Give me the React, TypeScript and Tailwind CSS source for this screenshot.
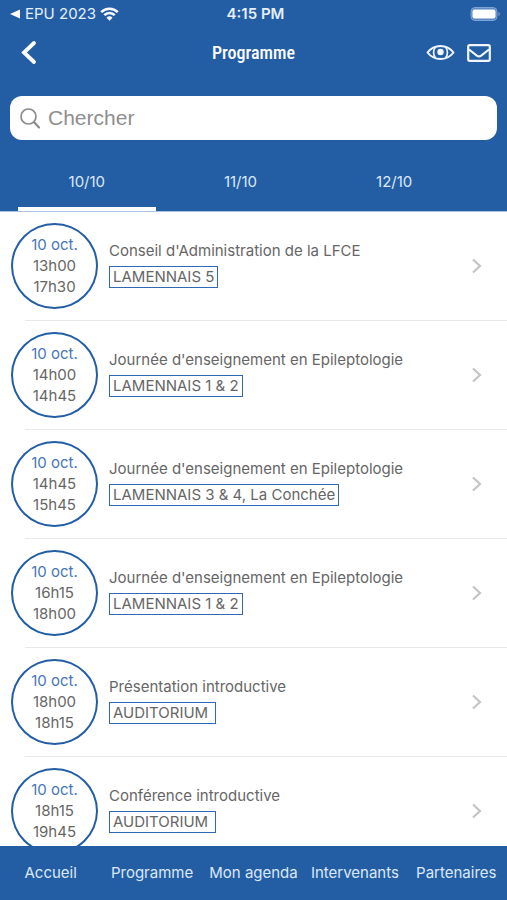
import React from "react";

const tabs = ["10/10", "11/10", "12/10"];

const sessions = [
  { start: "13h00", end: "17h30", title: "Conseil d'Administration de la LFCE", room: "LAMENNAIS 5" },
  { start: "14h00", end: "14h45", title: "Journée d'enseignement en Epileptologie", room: "LAMENNAIS 1 & 2" },
  { start: "14h45", end: "15h45", title: "Journée d'enseignement en Epileptologie", room: "LAMENNAIS 3 & 4, La Conchée" },
  { start: "16h15", end: "18h00", title: "Journée d'enseignement en Epileptologie", room: "LAMENNAIS 1 & 2" },
  { start: "18h00", end: "18h15", title: "Présentation introductive", room: "AUDITORIUM\u00a0" },
  { start: "18h15", end: "19h45", title: "Conférence introductive", room: "AUDITORIUM\u00a0" },
];

const links = ["Accueil", "Programme", "Mon agenda", "Intervenants", "Partenaires"];

const StatusBar = () => (
  <div className="grid h-7 grid-cols-3 items-center pr-1.5 pl-2.5 text-[15px] leading-5 text-[#e6eefa]">
    <div className="flex items-center gap-1 whitespace-nowrap">
      <svg width="11" height="10" viewBox="0 0 11 10" fill="#fff" aria-hidden="true">
        <path d="M0 5 10 .5v9z" />
      </svg>
      <span>EPU 2023</span>
      <svg width="19" height="14" viewBox="0 0 19 14" fill="none" stroke="#fff" strokeWidth="2.6" aria-hidden="true">
        <path d="M1.2 5.1a11.8 11.8 0 0 1 16.6 0" />
        <path d="M4.3 8.2a7.4 7.4 0 0 1 10.4 0" />
        <path d="M9.5 13.8 6.5 10.7a4.3 4.3 0 0 1 6 0z" fill="#fff" stroke="none" />
      </svg>
    </div>
    <span className="text-center font-semibold">4:15 PM</span>
    <svg className="justify-self-end" width="31" height="14" viewBox="0 0 31 14" aria-hidden="true">
      <rect x="1" y=".5" width="26" height="13" rx="4" fill="#5d89c2" stroke="#7fa3d3" />
      <rect x="2.5" y="2.5" width="23" height="9" rx="2.2" fill="#fff" />
      <path d="M28.5 5v4c1.800-.6 1.800-3.400 0-4z" fill="#7fa3d3" />
    </svg>
  </div>
);

const TopBar = () => (
  <div className="grid h-[50px] grid-cols-3 items-center px-4 text-white">
    <button type="button" aria-label="Retour" className="justify-self-start px-1">
      <svg width="18" height="26" viewBox="0 0 18 26" fill="none" stroke="#fff" strokeWidth="3.8" strokeLinecap="round" strokeLinejoin="miter">
        <path d="M14 3 4 12.500l10 9.500" />
      </svg>
    </button>
    <h1 className="text-center font-['Roboto_Condensed','Roboto',sans-serif] text-[18px] leading-6 font-medium">
      Programme
    </h1>
    <div className="flex items-center gap-3 justify-self-end">
      <button type="button" aria-label="Afficher">
        <svg width="29" height="18" viewBox="0 0 29 18" fill="none" stroke="#f0f6ff" strokeWidth="2">
          <path d="M1.5 8.500C5 4 9.500 2 14.500 2S24 4 27.500 8.500C24 13 19.500 15 14.500 15S5 13 1.500 8.500z" strokeLinejoin="round" />
          <path d="M9.500 3c-2.600 3-2.600 8 0 11M19.500 3c2.600 3 2.600 8 0 11" strokeWidth="1.700" />
          <circle cx="14.500" cy="8" r="3.200" fill="#f0f6ff" stroke="none" />
        </svg>
      </button>
      <button type="button" aria-label="Messages">
        <svg width="24" height="18" viewBox="0 0 24 18" fill="none" stroke="#f0f6ff" strokeWidth="2.200" strokeLinejoin="round">
          <rect x="1.200" y="1.200" width="21.600" height="15.600" rx="1.500" />
          <path d="M2 5.500 9.800 11.700q2.200 1.500 4.400 0L22 5.500" />
        </svg>
      </button>
    </div>
  </div>
);

const App = () => {
  return (
    <div className="flex h-screen flex-col bg-white font-['Inter',sans-serif]">
      <header className="shrink-0 border-b border-[#a9c1e2] bg-[#235ea5]">
        <StatusBar />
        <TopBar />

        {/* Search */}
        <label className="mx-2.5 mt-[18px] flex h-11 items-center gap-2 rounded-xl bg-white px-2.5">
          <svg width="20" height="21" viewBox="0 0 20 21" fill="none" stroke="#8b8b8b" strokeWidth="1.700" strokeLinecap="round" aria-hidden="true">
            <circle cx="8.500" cy="8.500" r="7.500" />
            <path d="m14 14 5 5.500" strokeWidth="2.200" />
          </svg>
          <input
            type="search"
            aria-label="Chercher"
            placeholder="Chercher"
            className="min-w-0 flex-1 bg-transparent font-['Liberation_Sans',sans-serif] text-[21px] text-gray-700 outline-none placeholder:text-[#8e8e8e]"
          />
        </label>

        {/* Days */}
        <nav className="grid h-[71px] grid-cols-3 pr-9 pl-2.5">
          {tabs.map((tab, i) => (
            <button
              key={tab}
              type="button"
              className={`mx-2 border-b-4 pt-[18px] text-[15px] text-[#dce8f8] ${
                i === 0 ? "border-white" : "border-transparent"
              }`}
            >
              {tab}
            </button>
          ))}
        </nav>
      </header>

      {/* Sessions */}
      <main className="min-h-0 flex-1 overflow-hidden">
        <ul>
          {sessions.map((s) => (
            <li key={s.start + s.title}>
              <a href="#" className="flex h-[108px] items-center pr-6 pl-[11px] text-[15px] text-[#666]">
                <div className="flex h-[86px] w-[87px] shrink-0 flex-col items-center justify-center rounded-[50%] border-2 border-[#235ea5] pb-0.5 leading-[21px]">
                  <span className="text-[#4676b8]">10 oct.</span>
                  <span>{s.start}</span>
                  <span>{s.end}</span>
                </div>
                <div className="ml-[11px] flex min-w-0 flex-1 flex-col items-start gap-1 pb-1">
                  <span className="leading-[22px]">{s.title}</span>
                  <span className="border border-[#2f69b3] px-[3px] leading-5">{s.room}</span>
                </div>
                <svg width="12" height="16" viewBox="0 0 12 16" fill="none" stroke="#c4c4c4" strokeWidth="2.200" aria-hidden="true">
                  <path d="m2 1.500 7 6.500-7 6.500" />
                </svg>
              </a>
              <div className="ml-[25px] h-px bg-[#e8eaea]"></div>
            </li>
          ))}
        </ul>
      </main>

      <nav className="grid h-[54px] shrink-0 grid-cols-5 items-center bg-[#235ea5] text-center text-[15px] whitespace-nowrap text-[#dce8f8]">
        {links.map((link) => (
          <a key={link} href="#">
            {link}
          </a>
        ))}
      </nav>
    </div>
  );
};

export default App;
